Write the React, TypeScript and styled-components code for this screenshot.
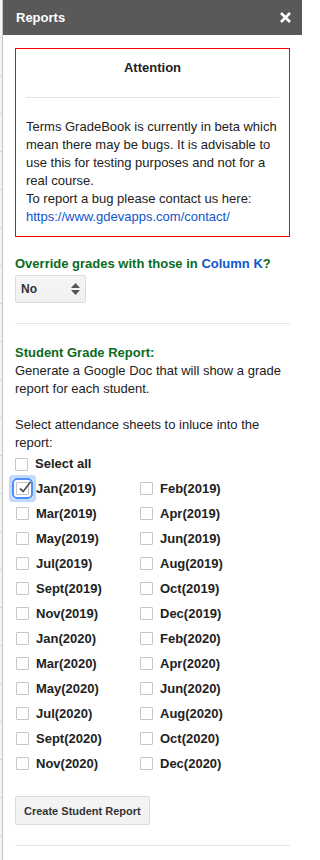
import { createGlobalStyle, styled } from 'styled-components';

const GlobalStyle = createGlobalStyle`
  html, body {
    margin: 0;
    padding: 0;
    background: #fff;
  }
  body {
    font-family: "Liberation Sans", Arial, sans-serif;
    font-size: 13px;
    color: #222;
  }
`;

const Page = styled.div`
  display: flex;
  width: 302px;
  min-height: 860px;
`;

const Gutter = styled.div`
  width: 2px;
  flex: none;
  background: repeating-linear-gradient(
    to bottom,
    #f4f4f4 0,
    #f4f4f4 37px,
    #d8d8d8 37px,
    #d8d8d8 38px
  );
  border-right: 1px solid #c4c4c4;
`;

const Panel = styled.div`
  flex: 1;
  display: flex;
  flex-direction: column;
  background: #fff;
`;

const Header = styled.div`
  height: 35px;
  background: #595959;
  display: flex;
  align-items: center;
  justify-content: space-between;
  padding: 0 11px 0 13px;
`;

const HeaderTitle = styled.span`
  color: #fff;
  font-weight: bold;
  font-size: 13px;
`;

const CloseIcon = styled.svg`
  width: 11px;
  height: 11px;
  stroke: #fff;
  stroke-width: 2.6;
  cursor: pointer;
`;

const Body = styled.div`
  padding: 13px 12px 0 12px;
  line-height: 18px;
`;

const NoticeBox = styled.div`
  border: 1px solid #ff0000;
  padding: 10px;
`;

const NoticeTitle = styled.div`
  font-weight: bold;
  text-align: center;
`;

const Rule = styled.hr<{ $gap: number }>`
  border: none;
  border-top: 1px solid #e5e5e5;
  margin: ${(p) => p.$gap}px 0;
`;

const NoticeText = styled.p`
  margin: 0;
  color: #222;
`;

const Link = styled.a`
  color: #1155cc;
  text-decoration: none;
`;

const GreenHeading = styled.div<{ $top: number }>`
  color: #0b6b1e;
  font-weight: bold;
  margin-top: ${(p) => p.$top}px;
`;

const Blue = styled.span`
  color: #1155cc;
`;

const SelectWrap = styled.div`
  position: relative;
  width: 71px;
  height: 28px;
  margin-top: 2px;
`;

const Select = styled.select`
  appearance: none;
  width: 100%;
  height: 100%;
  border: 1px solid #dcdcdc;
  border-radius: 2px;
  background: linear-gradient(#f5f5f5, #f1f1f1);
  font-family: "Liberation Sans", Arial, sans-serif;
  font-size: 12px;
  font-weight: bold;
  color: #333;
  padding: 0 0 0 5px;
  margin: 0;
`;

const SelectArrows = styled.svg`
  position: absolute;
  right: 6px;
  top: 8px;
  width: 9px;
  height: 12px;
  fill: #555;
  pointer-events: none;
`;

const Paragraph = styled.p`
  margin: 0;
`;

const SelectAllRow = styled.label`
  display: flex;
  align-items: center;
  height: 24px;
  font-weight: bold;
`;

const MonthGrid = styled.div`
  display: grid;
  grid-template-columns: 124px 1fr;
  grid-auto-rows: 25px;
`;

const MonthItem = styled.label`
  display: flex;
  align-items: center;
  font-weight: bold;
  padding-left: 1px;
`;

const Box = styled.span<{ $focused?: boolean }>`
  position: relative;
  width: 13px;
  height: 13px;
  flex: none;
  border: 1px solid #c6c6c6;
  border-radius: 1px;
  box-sizing: border-box;
  margin-right: 7px;
  background: #fff;
  ${(p) =>
    p.$focused &&
    `
    outline: 2px solid #4d90fe;
    outline-offset: 2px;
    box-shadow: 0 0 0 4px #fff, 0 0 0 7px rgba(77, 144, 254, 0.35);
  `}
`;

const CheckMark = styled.svg`
  position: absolute;
  left: 1px;
  top: -3px;
  width: 14px;
  height: 14px;
  fill: none;
  stroke: #555;
  stroke-width: 1.8;
`;

const Button = styled.button`
  margin-top: 20px;
  height: 29px;
  padding: 0 8px;
  border: 1px solid #dcdcdc;
  border-radius: 2px;
  background: linear-gradient(#f5f5f5, #f1f1f1);
  font-family: "Liberation Sans", Arial, sans-serif;
  font-size: 11px;
  font-weight: bold;
  color: #333;
  cursor: pointer;
`;

const months = [
  'Jan(2019)', 'Feb(2019)', 'Mar(2019)', 'Apr(2019)', 'May(2019)', 'Jun(2019)',
  'Jul(2019)', 'Aug(2019)', 'Sept(2019)', 'Oct(2019)', 'Nov(2019)', 'Dec(2019)',
  'Jan(2020)', 'Feb(2020)', 'Mar(2020)', 'Apr(2020)', 'May(2020)', 'Jun(2020)',
  'Jul(2020)', 'Aug(2020)', 'Sept(2020)', 'Oct(2020)', 'Nov(2020)', 'Dec(2020)',
];

function Checkbox({ checked, focused }: { checked?: boolean; focused?: boolean }) {
  return (
    <Box $focused={focused}>
      {checked && (
        <CheckMark viewBox="0 0 14 14">
          <path d="M2 8.5 L5.2 11.5 L12.5 2" />
        </CheckMark>
      )}
    </Box>
  );
}

export default function App() {
  return (
    <>
      <GlobalStyle />
      <Page>
        <Gutter />
        <Panel>
          <Header>
            <HeaderTitle>Reports</HeaderTitle>
            <CloseIcon viewBox="0 0 11 11">
              <path d="M1 1 L10 10 M10 1 L1 10" />
            </CloseIcon>
          </Header>
          <Body>
            <NoticeBox>
              <NoticeTitle>Attention</NoticeTitle>
              <Rule $gap={20} />
              <NoticeText>
                Terms GradeBook is currently in beta which mean there may be bugs. It is advisable to
                use this for testing purposes and not for a real course.
                <br />
                To report a bug please contact us here:
                <br />
                <Link href="#">https://www.gdevapps.com/contact/</Link>
              </NoticeText>
            </NoticeBox>

            <GreenHeading $top={18}>
              Override grades with those in <Blue>Column K</Blue>?
            </GreenHeading>
            <SelectWrap>
              <Select defaultValue="No">
                <option>No</option>
                <option>Yes</option>
              </Select>
              <SelectArrows viewBox="0 0 9 12">
                <path d="M4.5 0 L9 5 H0 Z M0 7 H9 L4.5 12 Z" />
              </SelectArrows>
            </SelectWrap>

            <Rule $gap={20} />

            <GreenHeading $top={0}>Student Grade Report:</GreenHeading>
            <Paragraph>
              Generate a Google Doc that will show a grade report for each student.
              <br />
              <br />
              Select attendance sheets to inluce into the report:
            </Paragraph>

            <SelectAllRow>
              <Checkbox />
              Select all
            </SelectAllRow>
            <MonthGrid>
              {months.map((m, i) => (
                <MonthItem key={m}>
                  <Checkbox checked={i === 0} focused={i === 0} />
                  {m}
                </MonthItem>
              ))}
            </MonthGrid>

            <Button>Create Student Report</Button>
            <Rule $gap={20} />
          </Body>
        </Panel>
      </Page>
    </>
  );
}
